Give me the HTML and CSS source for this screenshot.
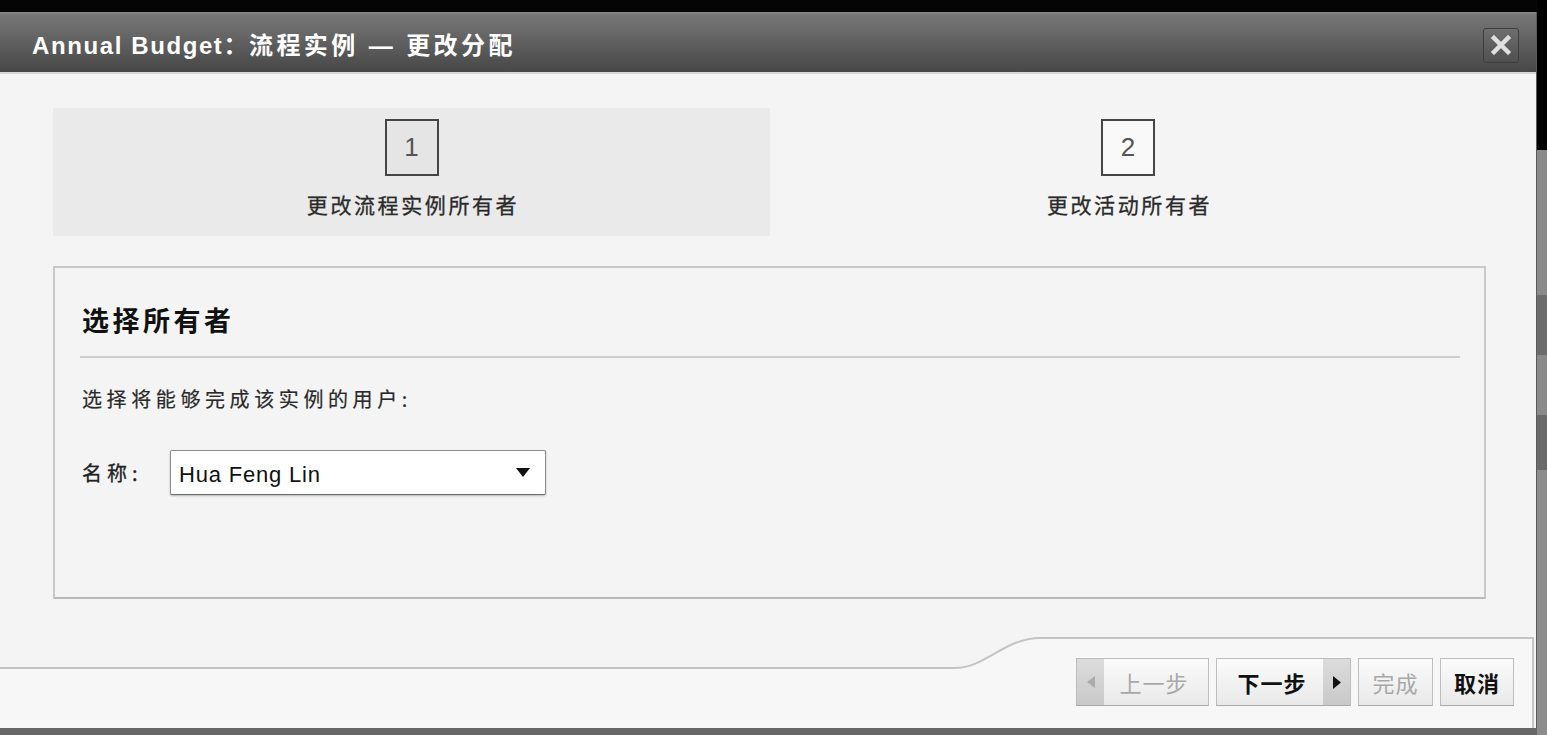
FILE: index.html
```html
<!DOCTYPE html>
<html lang="zh-CN">
<head>
<meta charset="utf-8">
<title>Annual Budget</title>
<link rel="stylesheet" href="styles.css">
</head>
<body>
<div class="page">
  <div class="main-col">
    <div class="top-band"></div>
    <div class="dialog">
      <div class="titlebar">
        <div class="title">Annual Budget：<span class="title-cn">流程实例 — 更改分配</span></div>
        <button class="close" aria-label="关闭">
          <svg width="22" height="20" viewBox="0 0 22 20"><path d="M4 3 L18 17 M18 3 L4 17" stroke="#e0e0e0" stroke-width="4.5" stroke-linecap="square"/></svg>
        </button>
      </div>
      <div class="body">
        <div class="steps">
          <div class="step active">
            <div class="step-num">1</div>
            <div class="step-label">更改流程实例所有者</div>
          </div>
          <div class="step">
            <div class="step-num">2</div>
            <div class="step-label">更改活动所有者</div>
          </div>
        </div>
        <div class="panel">
          <h2 class="panel-title">选择所有者</h2>
          <p class="panel-text">选择将能够完成该实例的用户:</p>
          <div class="field">
            <span class="field-label">名称:</span>
            <div class="select">
              <span class="select-value">Hua Feng Lin</span>
              <svg class="select-arrow" width="14" height="9" viewBox="0 0 14 9"><path d="M0 0 H14 L7 9 Z" fill="#111"/></svg>
            </div>
          </div>
        </div>
        <div class="footer">
          <svg class="footer-shape" width="1536" height="129" viewBox="0 0 1536 129" preserveAspectRatio="none">
            <path d="M0 69 H955 C985 69 1005 39 1040 39 H1533 V129 H0 Z" fill="#f7f7f7"/>
            <path d="M0 69 H955 C985 69 1005 39 1040 39 H1533 V129" fill="none" stroke="#c4c4c4" stroke-width="2"/>
          </svg>
          <div class="buttons">
            <button class="btn btn-prev disabled"><span class="arrow-l"><svg width="8" height="12" viewBox="0 0 8 12"><path d="M8 0 V12 L0 6 Z" fill="#aaa"/></svg></span><span class="btn-text">上一步</span></button>
            <button class="btn btn-next"><span class="btn-text">下一步</span><span class="arrow-r"><svg width="8" height="13" viewBox="0 0 8 13"><path d="M0 0 V13 L8 6.5 Z" fill="#111"/></svg></span></button>
            <button class="btn btn-finish disabled"><span class="btn-text">完成</span></button>
            <button class="btn btn-cancel"><span class="btn-text">取消</span></button>
          </div>
        </div>
      </div>
    </div>
    <div class="bottom-band"></div>
  </div>
  <div class="side-strip"></div>
</div>
</body>
</html>
```

FILE: styles.css
```css
* { box-sizing: border-box; }
html, body { margin: 0; padding: 0; }
body {
  background: #000;
  font-family: "Liberation Sans", Arial, "Noto Sans CJK SC", sans-serif;
  color: #222;
}
.page {
  display: flex;
  width: 1547px;
  height: 735px;
  overflow: hidden;
}
.main-col {
  width: 1537px;
  display: flex;
  flex-direction: column;
}
.top-band { height: 12px; background: #050505; }
.bottom-band { height: 7px; background: #676767; }
.side-strip {
  flex: 1;
  background: linear-gradient(to bottom,
    #000 0, #000 150px,
    #8a8a8a 150px, #8a8a8a 295px,
    #6c6c6c 295px, #6c6c6c 355px,
    #8a8a8a 355px, #8a8a8a 415px,
    #6a6a6a 415px, #6a6a6a 470px,
    #8c8c8c 470px);
}
.dialog {
  height: 716px;
  display: flex;
  flex-direction: column;
  background: #f4f4f4;
  border-right: 1px solid #5a5a5a;
}
.titlebar {
  height: 62px;
  flex: none;
  display: flex;
  align-items: center;
  justify-content: space-between;
  padding: 0 17px 0 32px;
  background: linear-gradient(to bottom, #8a8a8a 0, #767676 3px, #606060 50%, #474747 100%);
  border-bottom: 2px solid #d8d8d8;
}
.title {
  color: #fff;
  font-weight: bold;
  font-size: 24px;
  letter-spacing: 1.6px;
  font-family: "Liberation Sans", Arial, "Noto Sans CJK SC", sans-serif;
  margin-top: 2px;
}
.title-cn { letter-spacing: 3.4px; }
.close {
  width: 36px;
  height: 35px;
  padding: 0;
  border: 1px solid #3e3e3e;
  border-radius: 3px;
  background: linear-gradient(to bottom, #6e6e6e, #505050);
  display: flex;
  align-items: center;
  justify-content: center;
  margin-top: 6px;
}
.body {
  flex: 1;
  display: flex;
  flex-direction: column;
  padding-top: 34px;
}
.steps {
  margin: 0 50px 0 53px;
  display: grid;
  grid-template-columns: 717px 1fr;
  height: 128px;
}
.step {
  display: flex;
  flex-direction: column;
  align-items: center;
  padding-top: 11px;
}
.step.active { background: #eaeaea; }
.step-num {
  width: 54px;
  height: 57px;
  border: 2px solid #454545;
  background: #f9f9f9;
  display: flex;
  align-items: center;
  justify-content: center;
  font-size: 26px;
  color: #555;
  font-family: "Liberation Sans", Arial, sans-serif;
}
.step.active .step-num { background: #e5e5e5; }
.step-label {
  margin-top: 16px;
  font-family: "Noto Sans CJK SC", sans-serif;
  font-size: 21px;
  letter-spacing: 2.6px;
  line-height: 24px;
  color: #2a2a2a;
  margin-left: 3px;
  -webkit-text-stroke: 0.3px #2a2a2a;
}
.panel {
  margin: 30px 50px 0 53px;
  height: 333px;
  border: 2px solid #c9c9c9;
  border-bottom-color: #b8b8b8;
  background: #f4f4f4;
  padding: 34px 24px 0 27px;
}
.panel-title {
  margin: 0 0 0 -2px;
  padding: 0 0 18px 2px;
  font-family: "Noto Sans CJK SC", sans-serif;
  font-weight: bold;
  font-size: 27px;
  letter-spacing: 3.5px;
  line-height: 36px;
  color: #111;
  border-bottom: 2px solid #cdcdcd;
}
.panel-text {
  margin: 29px 0 0;
  font-family: "Noto Sans CJK SC", sans-serif;
  font-size: 20px;
  letter-spacing: 4.6px;
  line-height: 24px;
  color: #2a2a2a;
  -webkit-text-stroke: 0.2px #2a2a2a;
}
.field {
  margin-top: 39px;
  display: flex;
  align-items: center;
}
.field-label {
  width: 88px;
  font-family: "Noto Sans CJK SC", sans-serif;
  font-size: 20px;
  letter-spacing: 5px;
  color: #222;
  -webkit-text-stroke: 0.3px #222;
}
.select {
  width: 376px;
  height: 45px;
  background: #fff;
  border: 1px solid #8c8c8c;
  border-bottom-color: #6c6c6c;
  border-radius: 2px;
  box-shadow: 0 1px 2px rgba(0,0,0,0.25);
  display: flex;
  align-items: center;
  justify-content: space-between;
  padding: 0 15px 0 8px;
}
.select-value {
  font-family: "Liberation Sans", Arial, sans-serif;
  font-size: 22px;
  color: #111;
  letter-spacing: 0.8px;
  margin-top: 4px;
}
.footer {
  flex: 1;
  position: relative;
  display: flex;
  justify-content: flex-end;
  align-items: flex-start;
  padding: 59px 22px 0 0;
}
.footer-shape {
  position: absolute;
  left: 0;
  top: 0;
}
.buttons {
  position: relative;
  display: flex;
  gap: 7px;
}
.btn {
  height: 48px;
  padding: 0;
  border: 1px solid #bdbdbd;
  border-bottom-color: #a8a8a8;
  background: linear-gradient(to bottom, #fbfbfb, #e9e9e9);
  display: flex;
  align-items: center;
  font-family: "Noto Sans CJK SC", sans-serif;
  font-size: 22px;
  letter-spacing: 1px;
  color: #111;
  font-weight: bold;
}
.btn.disabled { color: #a8a8a8; font-weight: normal; }
.btn-prev { width: 133px; }
.btn-next { width: 135px; }
.btn-finish { width: 75px; justify-content: center; }
.btn-cancel { width: 74px; justify-content: center; }
.arrow-l, .arrow-r {
  width: 27px;
  align-self: stretch;
  display: flex;
  align-items: center;
  justify-content: center;
  background: linear-gradient(to bottom, #dcdcdc, #c9c9c9);
}
.btn-prev .btn-text { flex: 1; text-align: center; padding-right: 4px; }
.btn-next .btn-text { flex: 1; text-align: center; padding-left: 4px; }
```
